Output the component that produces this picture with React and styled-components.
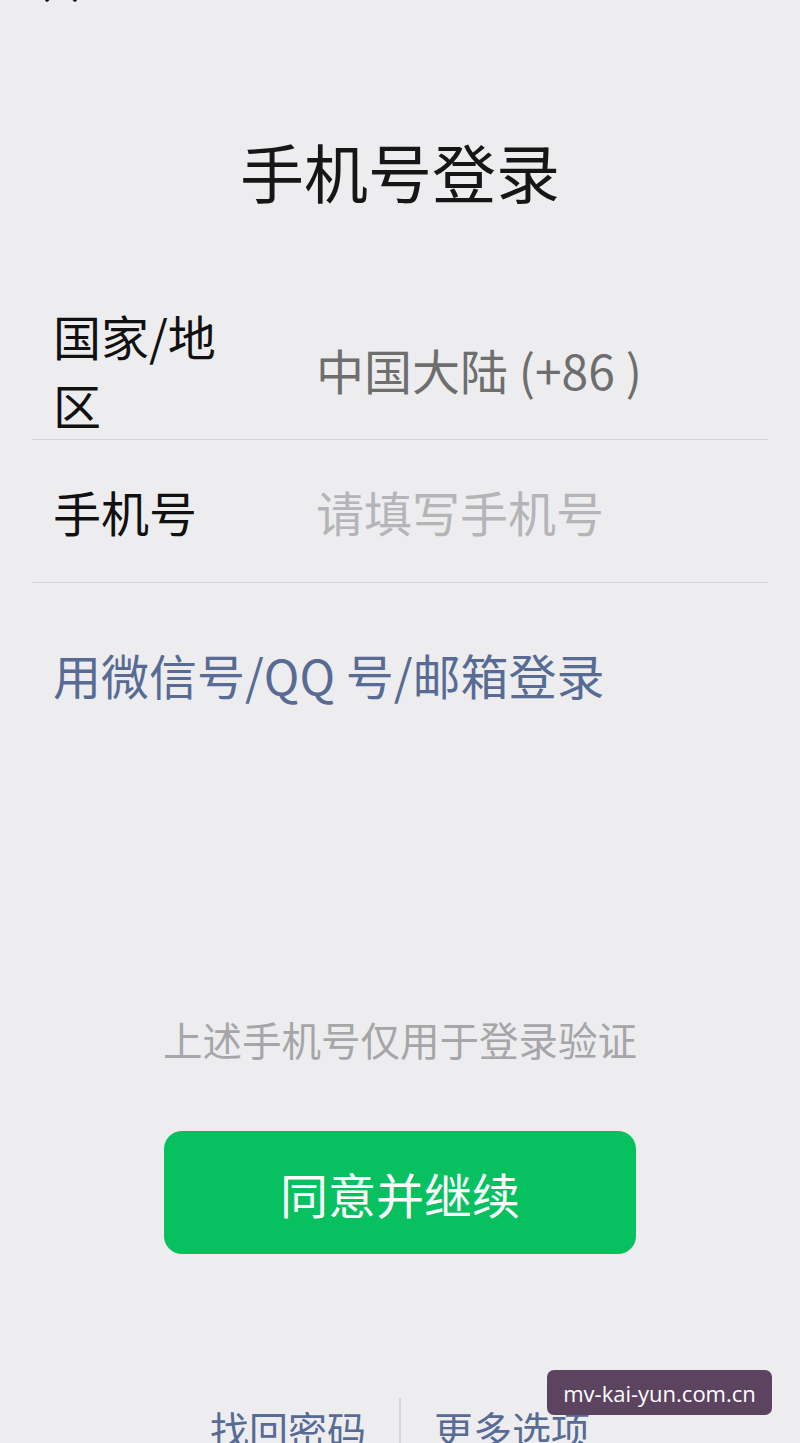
import styled, { createGlobalStyle } from 'styled-components';

const Global = createGlobalStyle`
    html, body {
        margin: 0;
        padding: 0;
        background: #EDEDEF;
        overflow: hidden;
    }
    * {
        box-sizing: border-box;
    }
`;

function CloseIcon() {
    return (
        <svg width="36" height="36" viewBox="0 0 36 36">
            <path d="M4 4 L32 32 M32 4 L4 32" stroke="#111" strokeWidth="3.5" strokeLinecap="round" fill="none" />
        </svg>
    );
}

function Campo({ label, value, placeholder }) {
    return (
        <Row>
            <Label>{label}</Label>
            <Value vazio={!value}>{value || placeholder}</Value>
        </Row>
    );
}

export default function App() {
    return (
        <>
            <Global />
            <Page>
                <TopBar>
                    <CloseIcon />
                </TopBar>
                <Title>手机号登录</Title>
                <Form>
                    <Campo label="国家/地区" value="中国大陆 (+86 )" />
                    <Campo label="手机号" placeholder="请填写手机号" />
                </Form>
                <OtherLogin>用微信号/QQ 号/邮箱登录</OtherLogin>
                <Hint>上述手机号仅用于登录验证</Hint>
                <ButtonWrap>
                    <Botao>同意并继续</Botao>
                </ButtonWrap>
                <Footer>
                    <FooterLink>找回密码</FooterLink>
                    <Divisor />
                    <FooterLink>更多选项</FooterLink>
                </Footer>
                <Watermark>mv-kai-yun.com.cn</Watermark>
            </Page>
        </>
    );
}

const Page = styled.div`
    position: relative;
    width: 800px;
    height: 1443px;
    overflow: hidden;
    background: #EDEDEF;
    font-family: "Noto Sans CJK SC", "Noto Sans", sans-serif;
`;

const TopBar = styled.div`
    height: 40px;
    margin-top: -34px;
    padding-left: 43px;
    display: flex;
    align-items: center;
`;

const Title = styled.h1`
    margin: 126px 0 0 0;
    text-align: center;
    font-size: 64px;
    line-height: 76px;
    font-weight: 400;
    color: #161616;
`;

const Form = styled.div`
    margin: 92px 32px 0 32px;
`;

const Row = styled.div`
    display: flex;
    align-items: center;
    min-height: 143px;
    padding-left: 21px;
    border-bottom: 1.5px solid #D6D6D8;
    &:first-child {
        min-height: 140px;
    }
`;

const Label = styled.div`
    flex: 0 0 263px;
    padding-right: 78px;
    font-size: 48px;
    line-height: 69px;
    color: #111111;
`;

const Value = styled.div`
    font-size: 48px;
    line-height: 69px;
    color: ${props => props.vazio ? "#B5B5B7" : "#6E6E6E"};
`;

const OtherLogin = styled.div`
    margin: 61px 0 0 53px;
    font-size: 48px;
    line-height: 60px;
    color: #576B95;
`;

const Hint = styled.div`
    margin-top: 310px;
    text-align: center;
    font-size: 39.5px;
    line-height: 50px;
    color: #A6A6A8;
`;

const ButtonWrap = styled.div`
    margin-top: 67px;
    display: flex;
    justify-content: center;
`;

const Botao = styled.button`
    width: 472px;
    height: 123px;
    border: none;
    border-radius: 18px;
    background: #07C160;
    color: #FFFFFF;
    font-family: "Noto Sans CJK SC", "Noto Sans", sans-serif;
    font-size: 48px;
    font-weight: 400;
`;

const Footer = styled.div`
    margin-top: 144px;
    display: flex;
    justify-content: center;
    align-items: center;
    gap: 33px;
`;

const FooterLink = styled.div`
    font-size: 39px;
    line-height: 60px;
    color: #576B95;
`;

const Divisor = styled.div`
    width: 2px;
    height: 60px;
    background: #D4D4D6;
`;

const Watermark = styled.div`
    position: absolute;
    left: 547px;
    top: 1370px;
    width: 225px;
    height: 45px;
    border-radius: 7px;
    background: #5C4460;
    color: #FFFFFF;
    display: flex;
    align-items: center;
    justify-content: center;
    font-family: "Open Sans", "Noto Sans", sans-serif;
    font-size: 22px;
`;
